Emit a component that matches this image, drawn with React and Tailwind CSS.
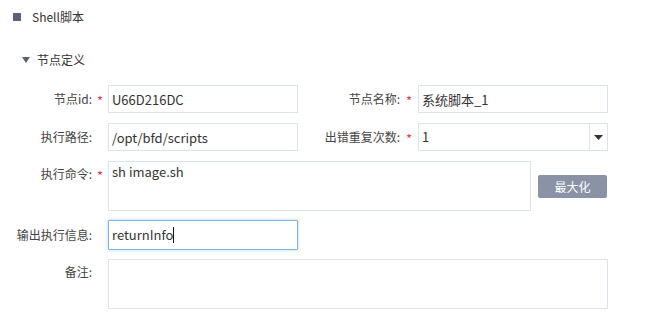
import { useState } from "react";

const font = { fontFamily: '"Noto Sans CJK SC", "Noto Sans", sans-serif' };

function Label({ children, star, className = "" }) {
  return (
    <>
      <div className={"text-right text-[12px] text-[#444] " + className}>{children}</div>
      <div className="flex justify-center text-[13px] text-[#e0424b] leading-none pt-[2px]">
        {star ? "*" : ""}
      </div>
    </>
  );
}

export default function App() {
  const [cmd, setCmd] = useState("sh image.sh");

  return (
    <div className="w-[671px] h-[321px] bg-white text-[#333]" style={font}>
      {/* Title */}
      <div className="flex items-center pl-[13px] pt-[8px] h-[26px]">
        <span className="w-[8px] h-[8px] bg-[#5b5f78]" />
        <span className="ml-[11px] text-[12px] text-[#333]">Shell脚本</span>
      </div>

      {/* Section */}
      <div className="flex items-center pl-[22px] mt-[22px] h-[24px]">
        <svg width="8" height="6" viewBox="0 0 8 6">
          <path d="M0 0 H8 L4 6 Z" fill="#5b5f78" />
        </svg>
        <span className="ml-[7px] text-[12px] text-[#333]">节点定义</span>
      </div>

      {/* Form */}
      <div className="grid grid-cols-[92px_16px_190px_102px_18px_190px] mt-[13px] items-center">
        {/* row 1 */}
        <Label star>节点id:</Label>
        <input
          readOnly
          value="U66D216DC"
          className="h-[28px] border border-[#dbe4ee] px-[3px] text-[13px] text-[#333] outline-none"
          style={font}
        />
        <Label star>节点名称:</Label>
        <input
          readOnly
          value="系统脚本_1"
          className="h-[28px] border border-[#dbe4ee] px-[3px] text-[13px] text-[#333] outline-none"
          style={font}
        />

        {/* row 2 */}
        <div className="col-span-6 h-[10px]" />
        <Label>执行路径:</Label>
        <input
          readOnly
          value="/opt/bfd/scripts"
          className="h-[28px] border border-[#dbe4ee] px-[3px] text-[13px] text-[#333] outline-none"
          style={font}
        />
        <Label star>出错重复次数:</Label>
        <div className="h-[28px] border border-[#dbe4ee] flex">
          <span className="flex-1 flex items-center px-[3px] text-[13px]">1</span>
          <span className="w-[18px] border-l border-[#dbe4ee] flex items-center justify-center">
            <svg width="9" height="5" viewBox="0 0 9 5">
              <path d="M0 0 H9 L4.5 5 Z" fill="#333" />
            </svg>
          </span>
        </div>

        {/* row 3 */}
        <div className="col-span-6 h-[10px]" />
        <div className="self-start pt-[5px] contents">
          <div className="self-start pt-[4px] text-right text-[12px] text-[#444]">执行命令:</div>
          <div className="self-start pt-[8px] flex justify-center text-[13px] text-[#e0424b] leading-none">*</div>
        </div>
        <div className="col-span-4 flex items-start gap-[7px]">
          <textarea
            value={cmd}
            onChange={(e) => setCmd(e.target.value)}
            className="w-[423px] h-[50px] border border-[#dbe4ee] px-[3px] py-[1px] text-[13px] text-[#333] outline-none resize-none leading-[18px]"
            style={font}
          />
          <button
            className="mt-[14px] w-[69px] h-[23px] rounded-[2px] bg-[#8a93a6] text-white text-[12px]"
            style={font}
          >
            最大化
          </button>
        </div>

        {/* row 4 */}
        <div className="col-span-6 h-[9px]" />
        <Label>输出执行信息:</Label>
        <div className="h-[30px] border border-[#7fb4e8] shadow-[0_0_3px_rgba(102,175,233,0.6)] rounded-[1px] flex items-center px-[3px] text-[13px] text-[#333]">
          returnInfo<span className="w-px h-[16px] bg-[#111]" />
        </div>
        <div className="col-span-3" />

        {/* row 5 */}
        <div className="col-span-6 h-[9px]" />
        <div className="self-start pt-[4px] text-right text-[12px] text-[#444]">备注:</div>
        <div />
        <div className="col-span-4">
          <textarea
            className="block w-[500px] h-[50px] border border-[#dbe4ee] outline-none resize-none"
            style={font}
          />
        </div>
      </div>
    </div>
  );
}
